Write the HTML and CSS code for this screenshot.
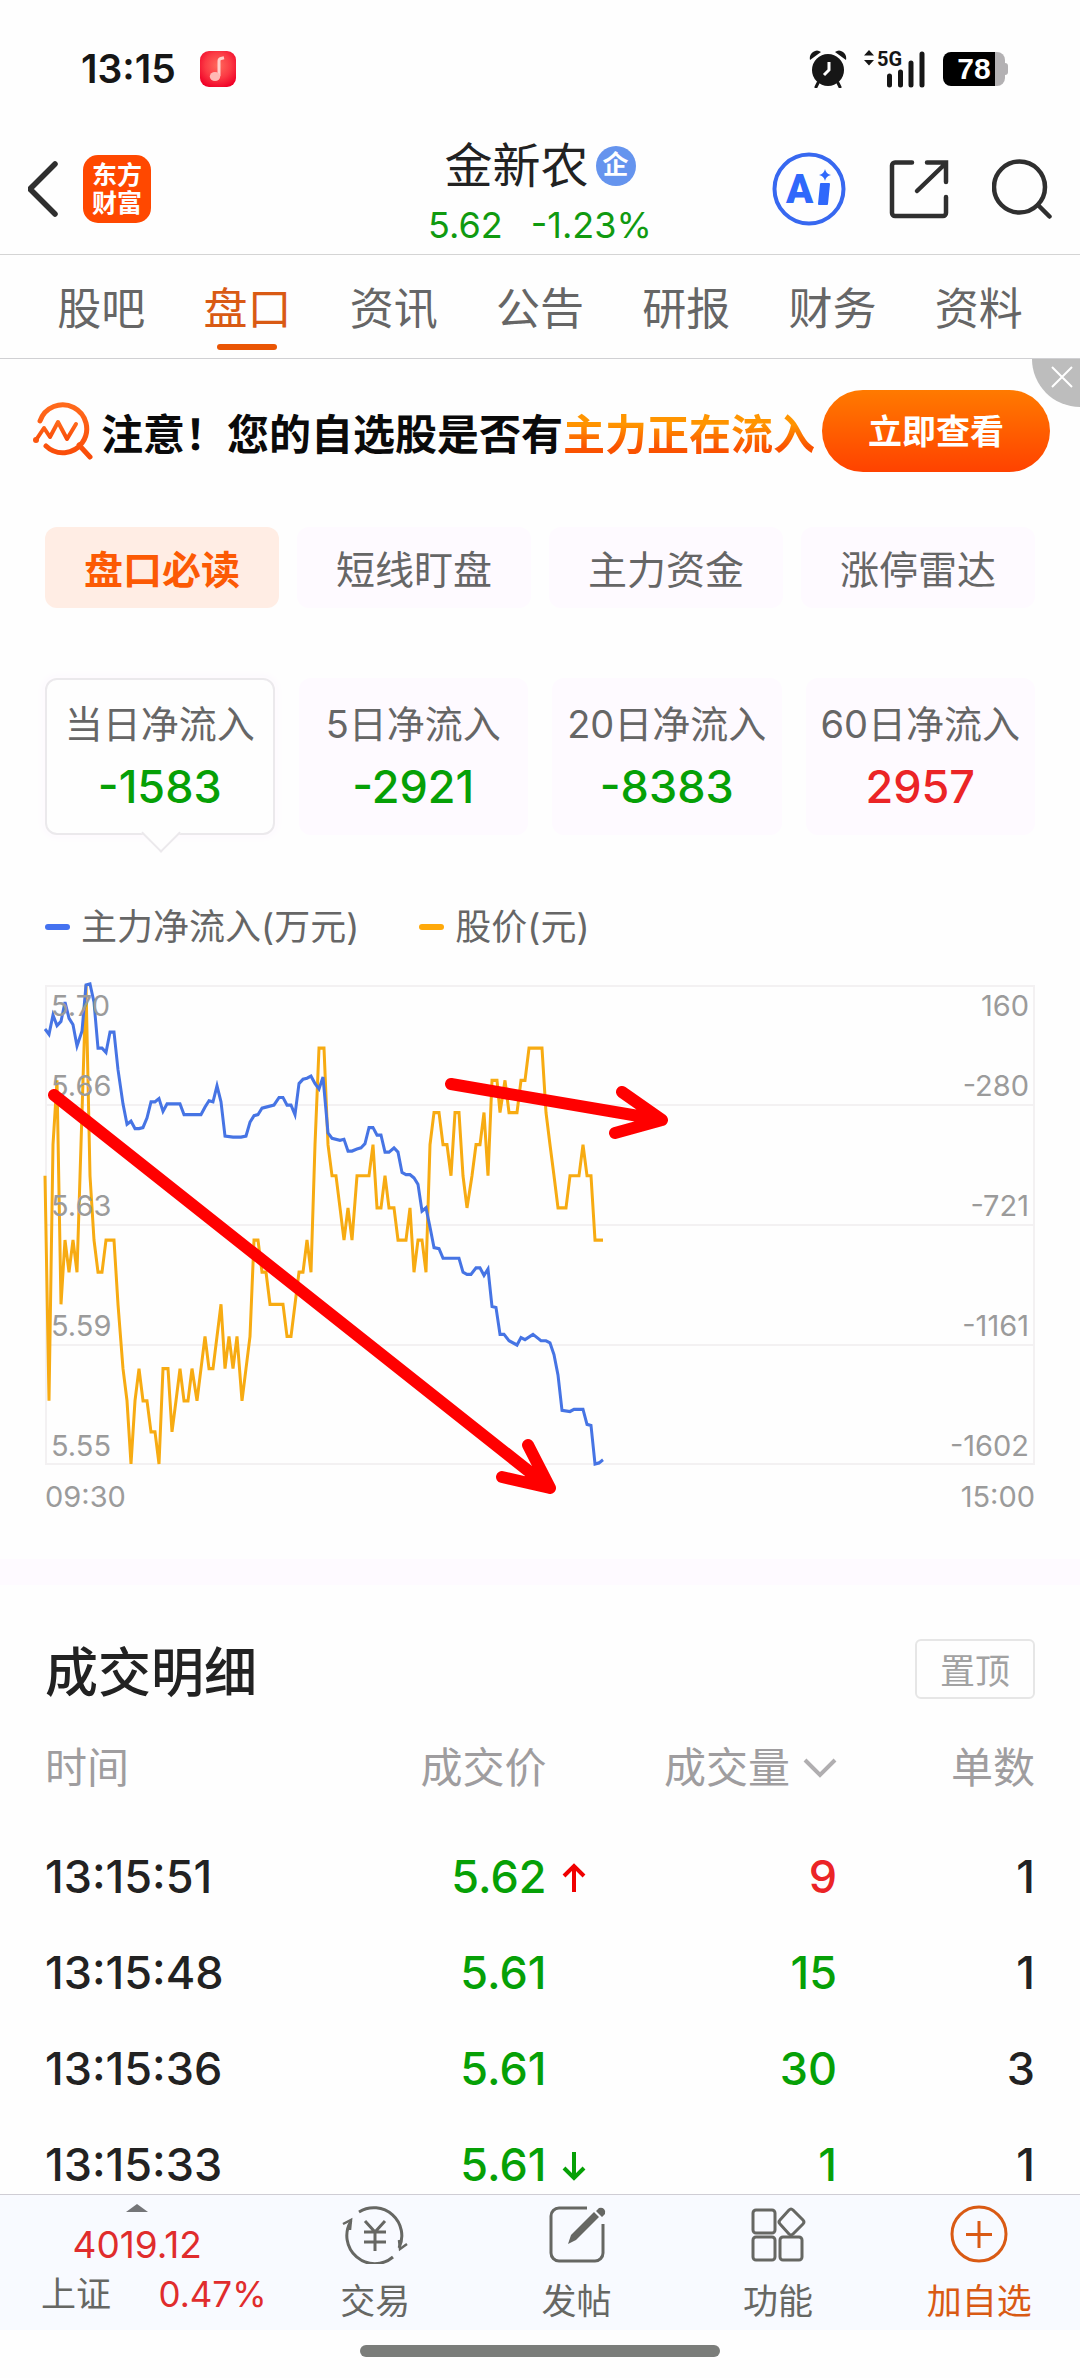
FILE: index.html
```html
<!DOCTYPE html>
<html lang="zh-CN">
<head>
<meta charset="utf-8">
<meta name="viewport" content="width=device-width, initial-scale=1">
<title>金新农 盘口</title>
<link rel="stylesheet" href="styles.css">
</head>
<body>
<div class="status">
  <span class="status-time">13:15</span>
  <svg class="status-music" width="36" height="36" viewBox="0 0 36 36" aria-hidden="true">
    <defs><radialGradient id="music" cx=".5" cy=".4" r=".65"><stop offset="0" stop-color="#ff6a5c"/><stop offset=".55" stop-color="#fb3a44"/><stop offset="1" stop-color="#f00027"/></radialGradient></defs>
    <rect width="36" height="36" rx="9" fill="url(#music)"/>
    <path d="M19 25V10q0-2 2-2.500l3-.7" fill="none" stroke="#ffd0cb" stroke-width="3"/>
    <ellipse cx="15" cy="25.500" rx="5.200" ry="4.500" fill="#ffb9b4"/>
  </svg>
  <span class="status-right">
    <svg width="38" height="38" viewBox="0 0 38 38" aria-hidden="true">
      <g fill="#161616"><circle cx="19" cy="20" r="16"/><path d="M1 10Q0 5 4 2t8 0zM37 10q1-5-3-8t-8 0z"/></g>
      <path d="M9 33l-2 4M29 33l2 4" stroke="#161616" stroke-width="3" stroke-linecap="round"/>
      <path d="M20 12v8l-5 5" fill="none" stroke="#fff" stroke-width="3"/>
    </svg>
    <svg width="62" height="46" viewBox="0 -4 62 46" aria-hidden="true">
      <path d="M5 0l5 5.500H0zM5 15.500L0 10h10z" fill="#161616"/>
      <text x="13" y="16" class="net-label">5G</text>
      <path d="M25.500 26v9M36.500 22v13M47 13v22M58 4v31" stroke="#161616" stroke-width="5" stroke-linecap="round"/>
    </svg>
    <span class="battery">78</span>
  </span>
</div>

<header class="header">
  <div class="header-side">
    <button class="icon-btn" aria-label="返回"><svg width="34" height="58" viewBox="2 0 34 58"><path d="M29 4L4 29l25 25" fill="none" stroke="#2f2f2f" stroke-width="5.500" stroke-linecap="round"/></svg></button>
    <a class="logo" href="#">东方<br>财富</a>
  </div>
  <div class="header-title">
    <h1 class="stock-name">金新农<span class="stock-badge">企</span></h1>
    <p class="stock-quote"><span>5.62</span><span>-1.23%</span></p>
  </div>
  <div class="header-side header-actions">
    <button class="icon-btn" aria-label="AI助手"><svg width="74" height="74" viewBox="0 0 74 74"><circle cx="37" cy="37" r="34.500" fill="none" stroke="#3768f0" stroke-width="4"/><text x="14" y="51" class="ai-label">A</text><path d="M49 32h8l-2 20h-8z" fill="#2f68fb" stroke="#2f68fb" stroke-width="2" stroke-linejoin="round"/><path d="M53 17q1 5 6 6-5 1-6 6-1-5-6-6 5-1 6-6z" fill="#2f68fb"/></svg></button>
    <button class="icon-btn" aria-label="分享"><svg width="60" height="60" viewBox="0 0 60 60"><path d="M23 3.500H6a3 3 0 0 0-3 3V54a3 3 0 0 0 3 3h48a3 3 0 0 0 3-3V38M38 3.500h19V23M56 5L28 32" fill="none" stroke="#2f2f2f" stroke-width="4.500" stroke-linecap="round"/></svg></button>
    <button class="icon-btn" aria-label="搜索"><svg width="60" height="60" viewBox="0 0 60 60"><circle cx="27.500" cy="28" r="25.500" fill="none" stroke="#2f2f2f" stroke-width="4.500"/><path d="M46 46l11.500 11.500" stroke="#2f2f2f" stroke-width="4.500" stroke-linecap="round"/></svg></button>
  </div>
</header>

<nav class="tabs">
  <a href="#">股吧</a>
  <a href="#" class="is-active">盘口</a>
  <a href="#">资讯</a>
  <a href="#">公告</a>
  <a href="#">研报</a>
  <a href="#">财务</a>
  <a href="#">资料</a>
</nav>

<main class="content">
  <section class="banner">
    <svg class="banner-icon" width="60" height="58" viewBox="0 0 60 58" aria-hidden="true">
      <defs><linearGradient id="lens" x1="0" y1="0" x2="0" y2="1"><stop offset="0" stop-color="#ff6a1c"/><stop offset="1" stop-color="#f94b08"/></linearGradient></defs>
      <g fill="none" stroke="url(#lens)" stroke-width="5" stroke-linecap="round" stroke-linejoin="round"><path d="M7 19A24 24 0 1 1 13 44M46 43l11 12"/><path d="M3 38l8-12 6 9 8-15 9 17 9-15" stroke-width="4"/></g>
      <circle cx="3" cy="38" r="3" fill="#fb560f"/>
    </svg>
    <p class="banner-text">注意！您的自选股是否有<span>主力正在流入</span></p>
    <button class="banner-btn">立即查看</button>
    <button class="banner-close" aria-label="关闭"><svg width="22" height="22" viewBox="0 0 22 22"><path d="M1 1l20 20M21 1L1 21" stroke="#fff" stroke-width="2"/></svg></button>
  </section>

  <div class="pills">
    <button class="pill is-active">盘口必读</button>
    <button class="pill">短线盯盘</button>
    <button class="pill">主力资金</button>
    <button class="pill">涨停雷达</button>
  </div>

  <div class="cards">
    <button class="card is-active"><span>当日净流入</span><strong class="down">-1583</strong></button>
    <button class="card"><span>5日净流入</span><strong class="down">-2921</strong></button>
    <button class="card"><span>20日净流入</span><strong class="down">-8383</strong></button>
    <button class="card"><span>60日净流入</span><strong class="up">2957</strong></button>
  </div>

  <div class="legend">
    <span class="legend-item flow">主力净流入(万元)</span>
    <span class="legend-item price">股价(元)</span>
  </div>

  <figure class="chart">
    <svg class="chart-plot" viewBox="0 0 990 480" role="img" aria-label="主力净流入与股价走势">
      <path d="M1 1H989V479H1zM0 120H990M0 240H990M0 360H990" fill="none" stroke="#f3f1f2" stroke-width="2"/>
      <svg class="series" width="990" height="479" viewBox="0 0 990 447" preserveAspectRatio="none">
        <polyline class="line-price" points="0,178 4,388 8,149 12,89 16,298 20,238 24,268 28,238 32,268 37,119 41,0 45,178 49,238 53,268 57,268 61,238 69,238 73,298 78,358 82,388 86,447 90,388 94,358 98,388 102,388 106,417 110,417 114,447 118,358 123,358 127,417 131,388 135,358 139,388 143,388 147,358 152,388 156,358 160,328 164,358 168,358 172,328 176,298 180,358 184,328 188,358 192,328 197,388 201,358 205,328 209,238 213,238 217,268 221,268 225,298 238,298 242,328 246,328 250,298 254,268 258,268 262,238 266,268 270,149 274,59 279,59 283,149 287,178 291,178 295,208 299,238 303,208 307,238 312,178 324,178 328,149 332,208 336,208 340,178 344,208 349,208 353,238 361,238 365,208 369,268 373,238 377,238 381,268 385,149 389,119 394,119 398,149 402,149 406,178 410,119 414,119 418,178 422,208 427,178 431,149 435,149 439,119 443,178 447,89 452,89 455,119 460,89 464,119 472,119 476,89 480,89 484,59 497,59 501,119 505,149 509,178 513,208 521,208 525,178 534,178 538,149 542,178 546,178 550,238 558,238"/>
        <polyline class="line-flow" points="0,41 4,46 8,28 12,38 16,34 20,16 24,31 28,37 32,57 37,43 41,0 45,-1 49,16 53,59 57,59 61,63 65,44 69,44 73,79 78,111 82,130 86,127 90,134 94,134 98,133 102,124 106,109 110,109 114,106 118,118 122,111 135,111 139,121 156,121 160,114 164,108 168,109 172,94 176,109 180,141 188,142 196,142 201,141 205,128 209,122 213,121 217,115 221,114 229,112 234,105 238,105 242,112 246,112 250,121 254,92 258,88 262,87 266,85 270,92 274,97 278,86 283,138 287,143 295,145 299,144 303,155 307,155 312,153 316,152 320,148 324,133 328,133 332,140 336,140 340,156 344,156 349,152 353,156 357,175 361,177 365,177 369,180 373,186 377,211 381,208 385,226 389,245 394,246 398,255 414,255 418,268 422,270 426,270 431,264 435,264 439,271 443,265 447,300 451,301 455,326 459,326 464,332 472,336 476,329 480,331 488,326 496,332 501,332 505,334 509,345 513,364 517,397 525,398 529,396 538,396 542,410 546,411 550,447 554,446 558,443"/>
      </svg>
      <g class="axis-label">
        <text x="6" y="31">5.70</text><text x="6" y="111">5.66</text><text x="6" y="231">5.63</text><text x="6" y="351">5.59</text><text x="6" y="471">5.55</text>
      </g>
      <g class="axis-label axis-end">
        <text x="984" y="31">160</text><text x="984" y="111">-280</text><text x="984" y="231">-721</text><text x="984" y="351">-1161</text><text x="984" y="471">-1602</text>
      </g>
      <path class="trend" d="M406 99L617 135M577 107L617 135L570 148M9 110L505 503M483 460L505 503L457 492"/>
    </svg>
    <figcaption class="chart-time"><span>09:30</span><span>15:00</span></figcaption>
  </figure>

  <section class="trades">
    <div class="trades-head">
      <h2>成交明细</h2>
      <button class="pin-btn">置顶</button>
    </div>
    <table class="trades-table">
      <thead>
        <tr><th scope="col">时间</th><th scope="col">成交价<i class="tick"></i></th><th scope="col"><button class="sort-btn">成交量<svg width="34" height="20" viewBox="0 0 34 20" aria-hidden="true"><path d="M2 2l15 15L32 2" fill="none" stroke="#b0aeb0" stroke-width="4"/></svg></button></th><th scope="col">单数</th></tr>
      </thead>
      <tbody>
        <tr><td>13:15:51</td><td class="down">5.62<i class="tick"><svg width="24" height="30" viewBox="0 0 24 30" aria-label="上涨"><path d="M12 29V3M2 13L12 3l10 10" fill="none" stroke="#f00000" stroke-width="4"/></svg></i></td><td class="up">9</td><td>1</td></tr>
        <tr><td>13:15:48</td><td class="down">5.61<i class="tick"></i></td><td class="down">15</td><td>1</td></tr>
        <tr><td>13:15:36</td><td class="down">5.61<i class="tick"></i></td><td class="down">30</td><td>3</td></tr>
        <tr><td>13:15:33</td><td class="down">5.61<i class="tick"><svg width="24" height="30" viewBox="0 0 24 30" aria-label="下跌"><path d="M12 1v26M2 17l10 10 10-10" fill="none" stroke="#06a006" stroke-width="4"/></svg></i></td><td class="down">1</td><td>1</td></tr>
      </tbody>
    </table>
  </section>
</main>

<footer class="bottom">
  <nav class="bottom-nav">
    <a class="index" href="#">
      <svg width="22" height="8" viewBox="0 0 22 8" aria-hidden="true"><path d="M11 0l11 8H0z" fill="#747578"/></svg>
      <span class="index-value">4019.12</span>
      <span class="index-row"><span>上证</span><span class="index-rate">0.47%</span></span>
    </a>
    <a class="nav-item" href="#">
      <svg width="66" height="60" viewBox="0 0 66 60" aria-hidden="true"><g fill="none" stroke="#666763" stroke-width="3"><path d="M17 8A28 28 0 0 1 57 44M51 53A28 28 0 0 1 9 17"/><path d="M1 20l8-4-1 10M65 40l-7 5-1-9" stroke-width="2.500"/><path d="M23 17l10 11 10-11M22 28h22M22 38h22M33 28v19"/></g></svg>
      交易
    </a>
    <a class="nav-item" href="#">
      <svg width="60" height="60" viewBox="0 0 60 60" aria-hidden="true"><path d="M40 4H12a8 8 0 0 0-8 8v37a8 8 0 0 0 8 8h36a8 8 0 0 0 8-8V20" fill="none" stroke="#666763" stroke-width="3"/><path d="M21 40l3-9 23-23 5 5-23 23zM49 7l3-3q3-1 5 1t1 5l-3 3z" fill="#666763"/></svg>
      发帖
    </a>
    <a class="nav-item" href="#">
      <svg width="60" height="60" viewBox="0 0 60 60" aria-hidden="true"><g fill="none" stroke="#666763" stroke-width="3"><rect x="5" y="6" width="22" height="23" rx="3"/><rect x="5" y="33" width="22" height="23" rx="3"/><rect x="32" y="33" width="22" height="23" rx="3"/><path d="M41 6q2-2 4 0l10 10q2 2 0 4L45 30q-2 2-4 0L32 20q-2-2 0-4z"/></g></svg>
      功能
    </a>
    <a class="nav-item is-accent" href="#">
      <svg width="60" height="60" viewBox="0 0 60 60" aria-hidden="true"><circle cx="30" cy="30" r="27" fill="none" stroke="#d95a14" stroke-width="3"/><path d="M30 17v27M17 30.500h26" stroke="#d95a14" stroke-width="3"/></svg>
      加自选
    </a>
  </nav>
  <div class="home-bar"></div>
</footer>
</body>
</html>
```
FILE: styles.css
```css
* { box-sizing: border-box; }

body {
  margin: 0;
  height: 100vh;
  display: flex;
  flex-direction: column;
  background: #fefefe;
  color: #222;
  font-family: Inter, "Noto Sans CJK SC", sans-serif;
}

button {
  border: 0;
  padding: 0;
  background: none;
  color: inherit;
  font: inherit;
}

a { color: inherit; text-decoration: none; }
h1, h2, p, figure { margin: 0; }
svg { display: block; flex: none; }

.up { color: #eb2426; }
.down { color: #06a006; }

/* status bar */
.status {
  flex: none;
  display: flex;
  align-items: center;
  padding: 46px 75px 31px 81px;
}
.status-time {
  font-size: 39px;
  line-height: 38px;
  font-weight: 600;
  color: #161616;
}
.status-music { margin-left: 24px; }
.status-right {
  margin-left: auto;
  display: flex;
  align-items: center;
  gap: 17px;
}
.net-label { font: 700 20px Roboto, sans-serif; fill: #161616; }
.battery {
  position: relative;
  width: 62px;
  height: 34px;
  border-radius: 8px;
  background: linear-gradient(90deg, #000 52px, #b3b1b3 52px);
  color: #fff;
  font: 700 30px/34px "Liberation Sans", sans-serif;
  text-align: center;
}
.battery::after {
  content: "";
  position: absolute;
  right: -3px;
  top: 11px;
  width: 4px;
  height: 12px;
  border-radius: 0 3px 3px 0;
  background: #b3b1b3;
}

/* header */
.header {
  flex: none;
  display: grid;
  grid-template-columns: 1fr auto 1fr;
  align-items: center;
  padding: 0 28px;
  border-bottom: 1px solid #d4d4d4;
}
.header-side { display: flex; align-items: center; gap: 21px; }
.header-actions { justify-content: flex-end; gap: 43px; }
.logo {
  width: 68px;
  height: 68px;
  padding: 6px 0;
  border-radius: 15px;
  background: #ff4800;
  color: #fff;
  font-size: 25px;
  line-height: 28px;
  font-weight: 700;
  text-align: center;
}
.header-title { padding-top: 13px; }
.stock-name {
  display: flex;
  align-items: center;
  justify-content: center;
  gap: 7px;
  font-size: 48px;
  line-height: 60px;
  font-weight: 400;
}
.stock-badge {
  width: 40px;
  height: 40px;
  border-radius: 20px;
  background: #6594ee;
  color: #fff;
  font-size: 26px;
  line-height: 38px;
  font-weight: 700;
  text-align: center;
}
.stock-quote {
  display: flex;
  justify-content: center;
  gap: 28px;
  font-size: 36px;
  line-height: 58px;
  color: #109a10;
}
.ai-label { font: 900 40px Roboto, sans-serif; fill: #2f68fb; }

/* section tabs */
.tabs {
  flex: none;
  display: flex;
  padding: 0 28px;
  border-bottom: 1px solid #d0d0d3;
}
.tabs a {
  position: relative;
  flex: 1;
  padding-top: 6px;
  font-size: 44px;
  line-height: 97px;
  color: #666;
  text-align: center;
}
.tabs .is-active { color: #d95a14; }
.tabs .is-active::after {
  content: "";
  position: absolute;
  left: 50%;
  bottom: 8px;
  width: 60px;
  height: 6px;
  margin-left: -30px;
  border-radius: 3px;
  background: #ea5504;
}

.content {
  flex: 1;
  min-height: 0;
  overflow-y: auto;
  scrollbar-width: none;
}

/* promo banner */
.banner {
  position: relative;
  display: flex;
  align-items: center;
  padding: 31px 30px 19px 33px;
}
.banner-text {
  flex: 1;
  padding: 8px 0 0 8px;
  font-size: 42px;
  line-height: 74px;
  font-weight: 700;
  color: #0a0a0a;
  white-space: nowrap;
}
.banner-text span {
  background: linear-gradient(#ff9500 30%, #fa5200 75%);
  -webkit-background-clip: text;
  background-clip: text;
  color: transparent;
}
.banner-btn {
  width: 228px;
  height: 82px;
  padding-bottom: 3px;
  border-radius: 41px;
  background: linear-gradient(#ff7a00, #ff4200);
  color: #fff;
  font-size: 34px;
  font-weight: 700;
}
.banner-close {
  position: absolute;
  top: 0;
  right: 0;
  width: 48px;
  height: 48px;
  padding: 7px 0 0 19px;
  border-radius: 0 0 0 48px;
  background: #bdbdbd;
  display: flex;
}

/* sub tabs */
.pills {
  display: flex;
  gap: 18px;
  padding: 36px 45px 0;
}
.pill {
  flex: 1;
  height: 81px;
  padding-bottom: 2px;
  border-radius: 12px;
  background: #fefaff;
  color: #666;
  font-size: 39px;
}
.pill.is-active { background: #ffede4; color: #fc5a04; font-weight: 700; }

/* net flow cards */
.cards {
  display: grid;
  grid-template-columns: repeat(4, minmax(0, 1fr));
  gap: 24px;
  padding: 70px 45px 0;
}
.card {
  position: relative;
  height: 157px;
  border: 2px solid transparent;
  border-radius: 12px;
  background: #fefaff;
  display: flex;
  flex-direction: column;
  align-items: center;
  padding-top: 14px;
  white-space: nowrap;
}
.card span { font-size: 38px; line-height: 60px; color: #666; }
.card strong { font-size: 45px; line-height: 66px; font-weight: 500; }
.card.is-active {
  background: #fefefe;
  border-color: #ebe9ec;
  box-shadow: 0 0 8px 2px #fdf8fe;
}
.card.is-active::after {
  content: "";
  position: absolute;
  left: 50%;
  bottom: -14px;
  width: 26px;
  height: 26px;
  margin-left: -13px;
  border: solid #ebe9ec;
  border-width: 0 2px 2px 0;
  background: #fefefe;
  transform: rotate(45deg);
}

/* chart */
.legend {
  display: flex;
  gap: 60px;
  padding: 67px 45px 0;
}
.legend-item {
  display: flex;
  align-items: center;
  gap: 11px;
  font-size: 36px;
  line-height: 50px;
  color: #666;
}
.legend-item::before {
  content: "";
  width: 25px;
  height: 6px;
  border-radius: 3px;
  background: #4472f0;
}
.legend-item.price::before { background: #ffa90a; }

.chart { padding: 33px 45px 0; }
.chart-plot { width: 100%; height: auto; overflow: visible; }
.series { overflow: visible; }
.line-price, .line-flow { fill: none; stroke-width: 3; }
.line-price { stroke: #f7ab12; }
.line-flow { stroke: #4674e4; }
.axis-label { font-size: 29px; fill: #9b9b9b; }
.axis-end { text-anchor: end; }
.trend {
  fill: none;
  stroke: #f00;
  stroke-width: 12;
  stroke-linecap: round;
  stroke-linejoin: round;
}
.chart-time {
  display: flex;
  justify-content: space-between;
  padding-top: 12px;
  font-size: 29px;
  line-height: 40px;
  color: #9b9b9b;
}

/* trades */
.trades {
  margin-top: 42px;
  padding: 54px 45px 0;
  border-top: 26px solid #fefaff;
}
.trades-head {
  display: flex;
  align-items: center;
  justify-content: space-between;
}
.trades-head h2 {
  padding-top: 8px;
  font-size: 53px;
  line-height: 52px;
  font-weight: 500;
}
.pin-btn {
  width: 120px;
  height: 60px;
  padding-bottom: 2px;
  border: 2px solid #e6e6e6;
  border-radius: 6px;
  color: #a2a2a2;
  font-size: 35px;
}
.trades-table {
  width: 100%;
  margin-top: 32px;
  border-collapse: collapse;
  table-layout: fixed;
}
.trades-table th {
  padding: 0;
  height: 98px;
  padding-bottom: 24px;
  color: #9f9d9f;
  font-size: 42px;
  line-height: 60px;
  font-weight: 400;
  text-align: right;
  white-space: nowrap;
}
.trades-table td {
  height: 96px;
  padding: 0;
  font-size: 45px;
  line-height: 60px;
  font-weight: 500;
  text-align: right;
}
.trades-table th:first-child, .trades-table td:first-child { width: 25%; text-align: left; }
.trades-table th:nth-child(2) { width: 30%; }
.trades-table th:nth-child(3) { width: 25%; }
.trades-table th:nth-child(4) { width: 20%; }
.tick {
  display: inline-block;
  width: 43px;
  padding-left: 15px;
}
.sort-btn { display: inline-flex; align-items: center; gap: 13px; }

/* bottom bar */
.bottom { flex: none; background: #fefefe; }
.bottom-nav {
  display: flex;
  height: 136px;
  border-top: 1px solid #cfcdd4;
  background: #f8faff;
  color: #666763;
  font-size: 35px;
}
.index {
  flex: 274;
  display: flex;
  flex-direction: column;
  align-items: center;
  padding-top: 9px;
}
.index-value { margin-top: 9px; font-size: 37px; line-height: 48px; color: #e02c2c; }
.index-row {
  align-self: stretch;
  display: flex;
  justify-content: space-between;
  padding: 0 8px 0 41px;
  line-height: 50px;
}
.index-rate { color: #e02c2c; }
.nav-item {
  flex: 201;
  display: flex;
  flex-direction: column;
  align-items: center;
  padding-top: 9px;
  gap: 11px;
  line-height: 52px;
}
.nav-item.is-accent { color: #d95a14; }
.home-bar {
  width: calc(100% / 3);
  height: 12px;
  margin: 15px auto 21px;
  border-radius: 6px;
  background: #7b7d7a;
}
```
